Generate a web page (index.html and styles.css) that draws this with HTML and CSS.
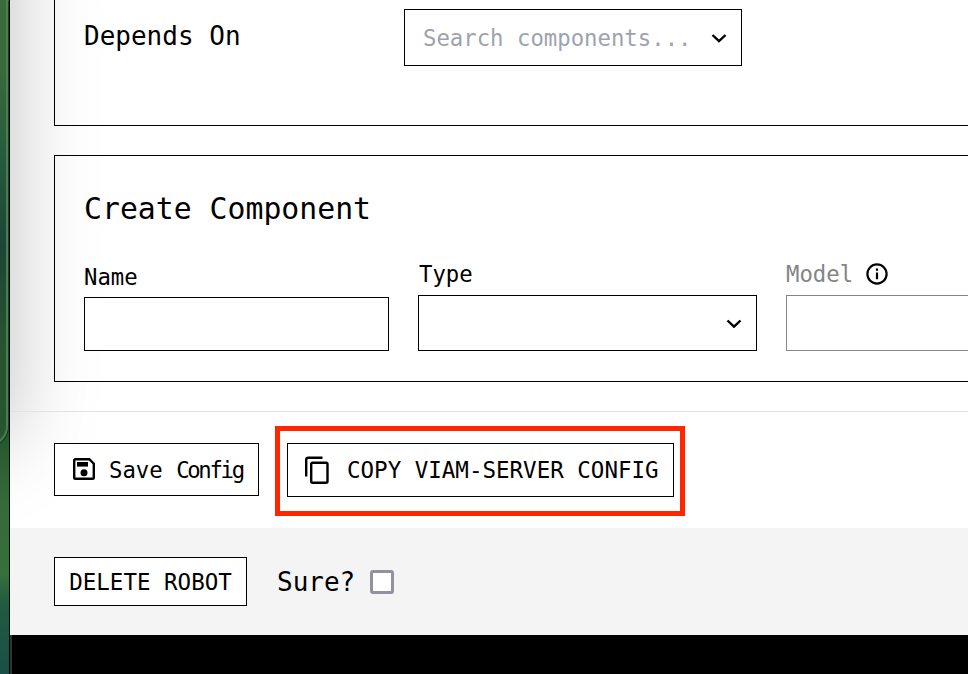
FILE: index.html
```
<!DOCTYPE html>
<html lang="en">
<head>
<meta charset="utf-8">
<title>Robot config</title>
<link rel="stylesheet" href="styles.css">
</head>
<body>
<div class="desktop"><div class="back-window"></div></div>
<main class="window">
  <div class="shade"></div>
  <section class="panel depends">
    <span class="depends-label">Depends On</span>
    <div class="search"><span>Search components...</span>
      <svg class="chevron" viewBox="0 0 16 10"><path d="M1.500 2 8 8.200l6.500-6.200"/></svg>
    </div>
  </section>
  <section class="panel create">
    <h2>Create Component</h2>
    <div class="fields">
      <div class="field name"><label>Name</label><div class="box"></div></div>
      <div class="field type"><label>Type</label><div class="box">
        <svg class="chevron" viewBox="0 0 16 10"><path d="M1.500 2.500 8 8.700l6.500-6.200"/></svg></div></div>
      <div class="field model"><div class="label-row"><label>Model</label>
        <svg class="info" viewBox="0 0 22 22"><circle cx="11" cy="11" r="9.600"/><path d="M11 9.500v6.800M11 5.500v2.300"/></svg></div>
        <div class="box"></div></div>
    </div>
  </section>
  <div class="actions">
    <div class="button save">
      <svg class="save-icon" viewBox="0 0 22 22"><path class="line" d="M2.500 1.200h13.800l4.500 4.500v13.800q0 1.300-1.300 1.300h-17q-1.300 0-1.300-1.300v-17q0-1.300 1.300-1.300z"/><path d="M4 4h11v4.600H4z"/><circle cx="11" cy="14.800" r="3.500"/></svg>
      <span>Save <span class="tight">Config</span></span>
    </div>
    <div class="highlight"><div class="button copy">
      <svg class="copy-icon" viewBox="0 0 24 28"><path d="M1.200 20.500V3.700q0-2 2-2H17.500"/><rect x="6.200" y="6.700" width="16.300" height="20" rx="1.500"/></svg>
      <span>COPY VIAM-SERVER CONFIG</span>
    </div></div>
  </div>
  <div class="danger">
    <div class="button delete">DELETE ROBOT</div>
    <span class="sure">Sure?</span>
    <span class="checkbox"></span>
  </div>
  <div class="bottom"></div>
</main>
</body>
</html>
```
FILE: styles.css
```
* { box-sizing: border-box; }
body {
  margin: 0;
  width: 968px;
  height: 674px;
  overflow: hidden;
  display: flex;
  background: #fff;
  color: #000;
  font: 22.3px/28px "DejaVu Sans Mono", monospace;
  white-space: nowrap;
}
svg { display: block; flex: none; fill: none; stroke: #000; }
.desktop {
  flex: none;
  width: 10px;
  height: 674px;
  overflow: hidden;
  border-right: 1px solid #000;
  background: linear-gradient(#3a6c3a 0, #386b39 70px, #235a3d 165px, #1c4536 245px, #29532e 350px, #25562e 430px, #35693a 500px, #36703a 575px, #205a42 605px, #195047 674px);
}
.back-window {
  width: 40px;
  height: 446px;
  margin-left: -32px;
  border-right: 2px solid #4e7a55;
  border-bottom: 2px solid #4e7a55;
  border-bottom-right-radius: 20px;
  box-shadow: 1px 1px 0 #173d25;
}
.window {
  position: relative;
  flex: none;
  width: 958px;
  height: 674px;
  overflow: hidden;
  display: flex;
  flex-direction: column;
}
.shade {
  position: absolute;
  z-index: -1;
  left: -800px;
  top: -400px;
  width: 800px;
  height: 840px;
  box-shadow: 0 0 80px rgba(0, 0, 0, .25);
}
.panel { flex: none; margin-left: 44px; border: 1px solid #000; border-right: 0; }
.depends {
  height: 126px;
  border-top: 0;
  padding: 9px 0 0 29px;
  display: flex;
  align-items: flex-start;
}
.depends-label { width: 320px; padding-top: 13px; font-size: 26px; }
.search {
  width: 338px;
  height: 57px;
  border: 1px solid #000;
  padding: 1px 14px 0 18px;
  display: flex;
  align-items: center;
  justify-content: space-between;
  background: #fff;
  color: #9ca3af;
}
.chevron { width: 16px; height: 10px; stroke-width: 2.4; }
.create { height: 227px; margin-top: 29px; padding: 34px 0 0 29px; }
h2 { margin: 0; font-size: 29.8px; line-height: 38px; font-weight: 400; }
.fields { display: flex; align-items: flex-end; gap: 29px; margin-top: 30px; height: 93px; }
.field { flex: none; }
.name { width: 305px; }
.type { width: 339px; }
.type label { padding-left: 1px; }
.model { width: 220px; }
.field label { height: 28px; display: block; }
.box { margin-top: 7px; border: 1px solid #000; height: 56px; background: #fff; }
.name .box { height: 54px; margin-top: 6px; }
.type .box { display: flex; align-items: center; justify-content: flex-end; padding-right: 14px; }
.label-row { display: flex; gap: 13px; align-items: center; }
.model label { color: #858585; }
.model .box { border-color: #858585; }
.info { width: 22px; height: 22px; margin-bottom: 1px; stroke-width: 2.2; }
.actions {
  flex: none;
  height: 117px;
  margin-top: 29px;
  border-top: 1px solid #e2e2e2;
  padding: 14px 0 0 44px;
  display: flex;
  align-items: flex-start;
  gap: 16px;
}
.button { flex: none; border: 1px solid #000; background: #fff; display: flex; align-items: center; }
.save { width: 205px; height: 53px; margin-top: 17px; padding-left: 18px; gap: 14px; }
.save-icon { width: 22px; height: 22px; margin-bottom: 1px; fill: #000; stroke: none; }
.save-icon .line { fill: none; stroke: #000; stroke-width: 2.4; }
.tight { letter-spacing: -2.3px; }
.highlight { width: 410px; height: 90px; border: 5px solid #ff2600; padding: 12px 0 0 7px; }
.copy { width: 387px; height: 54px; padding-left: 17px; gap: 18px; font-size: 22.5px; }
.copy-icon { width: 24px; height: 28px; stroke-width: 2.4; }
.danger {
  flex: none;
  height: 107px;
  padding: 0 0 0 44px;
  display: flex;
  align-items: center;
  background: #f4f4f4;
}
.delete { width: 193px; height: 49px; justify-content: center; font-size: 22.5px; }
.sure { margin-left: 30px; width: 93px; font-size: 26px; }
.checkbox { width: 24px; height: 24px; border: 3px solid #9291a0; border-radius: 3px; background: #fff; }
.bottom { flex: 1; background: #000; border-left: 2px solid #333; }
```
